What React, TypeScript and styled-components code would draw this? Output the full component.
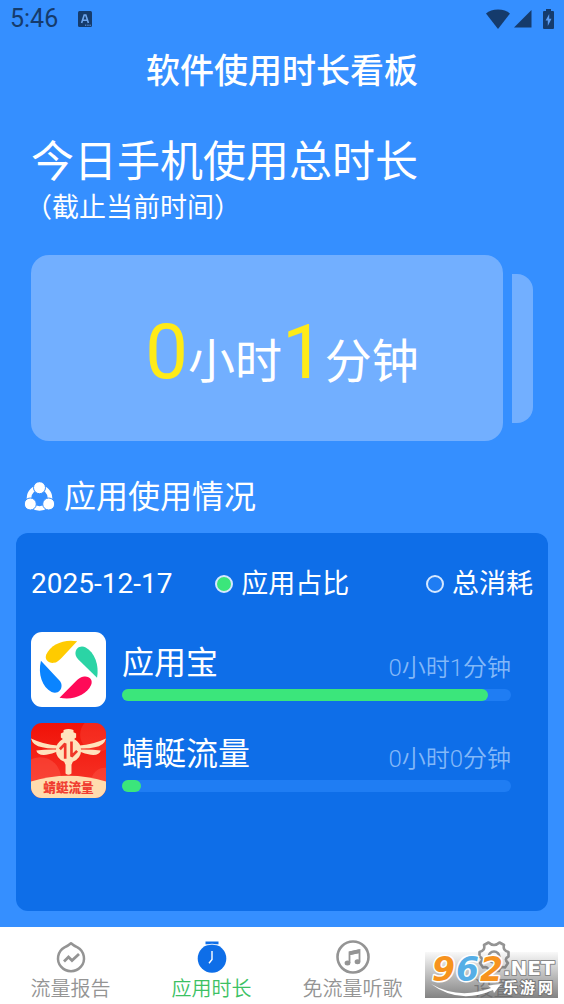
import React from 'react';
import styled, { createGlobalStyle } from 'styled-components';

const GlobalStyle = createGlobalStyle`
  * { box-sizing: border-box; }
  body {
    margin: 0;
    background: #358fff;
    font-family: Roboto, 'Noto Sans CJK SC', sans-serif;
  }
  h1, h2, p, ul { margin: 0; padding: 0; font-weight: 400; }
  ul { list-style: none; }
  svg { display: block; }
`;

const Page = styled.div`
  position: relative;
  display: flex;
  flex-direction: column;
  min-height: 100vh;
  background: #358fff;
  color: #fff;
`;

const StatusBar = styled.header`
  display: flex;
  align-items: center;
  height: 38px;
  padding: 0 10px;
  color: #153b6c;
`;

const Clock = styled.span`
  font-size: 25px;
  line-height: 38px;
  margin-right: 20px;
`;

const StatusIcons = styled.div`
  display: flex;
  align-items: center;
  gap: 4px;
  margin-left: auto;
`;

const Title = styled.h1`
  padding: 8px 16px 0;
  text-align: center;
  font-size: 34px;
  line-height: 50px;
  font-weight: 500;
`;

const Intro = styled.section`
  padding: 36px 31px 0;
`;

const Headline = styled.h2`
  font-size: 43px;
  line-height: 60px;
`;

const Note = styled.p`
  margin-left: -6px;
  font-size: 27px;
  line-height: 32px;
`;

const Summary = styled.section`
  display: flex;
  align-items: center;
  gap: 9px;
  padding: 31px 31px 0;
`;

const SummaryCard = styled.div`
  flex: 1;
  display: flex;
  align-items: baseline;
  justify-content: center;
  height: 186px;
  padding: 52px 0 0 30px;
  border-radius: 18px;
  background: #72afff;
  font-size: 47px;
  line-height: 90px;
  white-space: nowrap;
`;

const Figure = styled.span`
  color: #ffeb17;
  font-size: 76px;
`;

const CardEdge = styled.div`
  width: 21px;
  height: 149px;
  border-radius: 0 16px 16px 0;
  background: #72afff;
`;

const SectionTitle = styled.h2`
  display: flex;
  align-items: center;
  gap: 9px;
  padding: 32px 24px 12px;
  font-size: 32px;
  line-height: 48px;
`;

const Panel = styled.section`
  flex: 1;
  margin: 0 16px 16px;
  padding: 28px 15px 32px;
  border-radius: 12px;
  background: #0e6ee8;
`;

const Legend = styled.div`
  display: flex;
  align-items: center;
  justify-content: space-between;
  font-size: 27px;
  line-height: 46px;
  white-space: nowrap;
`;

const DateText = styled.time`
  font-size: 28px;
`;

const LegendItem = styled.span<{ $last?: boolean }>`
  display: flex;
  align-items: center;
  gap: 8px;
  margin-right: ${(p) => (p.$last ? '0' : '34px')};
`;

const Dot = styled.i<{ $color: string }>`
  width: 18px;
  height: 18px;
  border: 2px solid #d6e8ff;
  border-radius: 50%;
  background: ${(p) => p.$color};
`;

const AppList = styled.ul`
  display: flex;
  flex-direction: column;
  gap: 16px;
  margin-top: 25px;
`;

const AppRow = styled.li`
  display: flex;
  gap: 16px;
  padding-right: 22px;
`;

const AppInfo = styled.div`
  flex: 1;
`;

const AppText = styled.div`
  display: flex;
  align-items: center;
  justify-content: space-between;
  height: 57px;
`;

const AppName = styled.span`
  padding-top: 6px;
  font-size: 32px;
  line-height: 51px;
`;

const Duration = styled.span`
  padding-top: 15px;
  color: #83b8f8;
  font-size: 24px;
  line-height: 42px;
  font-weight: 350;
`;

const Track = styled.div`
  height: 12px;
  border-radius: 6px;
  background: #1f7df3;
`;

const Fill = styled.div`
  height: 12px;
  border-radius: 6px;
  background: #3be67b;
`;

const Nav = styled.nav`
  display: grid;
  grid-template-columns: repeat(4, 1fr);
  height: 77px;
  background: #fff;
`;

const NavButton = styled.button<{ $active?: boolean }>`
  display: flex;
  flex-direction: column;
  align-items: center;
  gap: 2px;
  padding: 14px 0 0;
  border: 0;
  background: none;
  color: ${(p) => (p.$active ? '#3cc163' : '#949494')};
  font: 350 20px/28px Roboto, 'Noto Sans CJK SC', sans-serif;
  white-space: nowrap;
`;

const Watermark = styled.div`
  position: absolute;
  right: 6px;
  bottom: 6px;
  background: linear-gradient(rgba(100, 100, 100, 0.04), rgba(100, 100, 100, 0.8));
`;

const KeyboardIcon = () => (
  <svg width="14" height="16" viewBox="0 0 14 16">
    <rect width="14" height="16" rx="1.5" fill="currentColor" />
    <path d="M3.6 12 6.2 4h1.6l2.6 8M4.7 9.3h4.6" fill="none" stroke="#6ea6ee" strokeWidth="1.6" />
    <path d="M7 14.2h1.3M9.3 14.2h1.3M11.5 14.2h1.3" stroke="#6ea6ee" strokeWidth="1" />
  </svg>
);

const WifiIcon = () => (
  <svg width="24" height="20" viewBox="0 0 24 20">
    <path d="M12 20 0 4.600C3 2 7 .6 12 .6S21 2 24 4.600Z" fill="currentColor" />
  </svg>
);

const SignalIcon = () => (
  <svg width="18" height="18" viewBox="0 0 18 18">
    <path d="M17.500 0V17.500H0Z" fill="currentColor" />
  </svg>
);

const BatteryIcon = () => (
  <svg width="18" height="20" viewBox="-7 0 18 20">
    <path d="M3 0h5v2h2q1 0 1 1v16q0 1-1 1H1q-1 0-1-1V3q0-1 1-1h2Z" fill="currentColor" />
    <path d="M6.200 5 2.600 11.500h2.200V17L8.500 9.700H6.200Z" fill="#5b9cf2" />
  </svg>
);

const RingIcon = () => (
  <svg width="31" height="30" viewBox="0 1 31 30">
    <circle cx="15.500" cy="17" r="10.500" fill="none" stroke="#fff" strokeWidth="4.600" />
    <g fill="#fff" stroke="#358fff" strokeWidth="1">
      <circle cx="15.500" cy="6.700" r="6" />
      <circle cx="6.300" cy="23" r="6" />
      <circle cx="24.700" cy="23" r="6" />
    </g>
  </svg>
);

const StoreIcon = () => (
  <svg width="75" height="75" viewBox="0 0 226 226">
    <rect width="226" height="226" rx="33" fill="#fff" />
    <path d="M139 28C100 20 58 38 46 68 40 84 52 94 68 93 78 92 84 86 92 78Z" fill="#ffcb00" />
    <path d="M199 138C206 100 192 62 165 47 150 39 133 48 134 66 135 74 140 80 148 88Z" fill="#2bd4a5" />
    <path d="M86 198C126 207 168 190 181 160 188 144 176 132 160 134 150 135 144 140 136 148Z" fill="#ff0a58" />
    <path d="M30 87C20 128 34 166 62 181 78 188 93 178 92 160 92 152 86 146 80 140Z" fill="#0a84ff" />
  </svg>
);

const DragonflyIcon = () => (
  <svg width="75" height="75" viewBox="0 0 226 226">
    <defs>
      <linearGradient id="red" x1="0" y1="0" x2="0" y2="1">
        <stop offset="0" stopColor="#f01208" />
        <stop offset="1" stopColor="#f8382c" />
      </linearGradient>
      <clipPath id="tile">
        <rect width="226" height="226" rx="33" />
      </clipPath>
    </defs>
    <g clipPath="url(#tile)">
      <rect width="226" height="226" fill="url(#red)" />
      <circle cx="200" cy="35" r="52" fill="#ff5a48" opacity=".3" />
      <circle cx="28" cy="165" r="62" fill="#ff6a58" opacity=".35" />
      <circle cx="222" cy="175" r="40" fill="#ff6a58" opacity=".3" />
      <path d="M0 176Q113 142 226 176V226H0Z" fill="#ffdcae" />
      <g fill="#ffe3bd">
        <path d="M98 21Q113 15 128 21V28L136 32V44L130 48Q151 60 151 82 151 106 126 117L122 126V152Q113 160 104 152V126L100 117Q75 106 75 82 75 60 96 48L90 44V32L98 28Z" />
        <path d="M80 68Q40 66 0 47 6 70 34 73 56 78 80 76ZM80 80Q44 79 16 83 20 99 46 96 64 93 80 86Z" />
        <path d="M146 68Q186 66 226 47 220 70 192 73 170 78 146 76ZM146 80Q182 79 210 83 206 99 180 96 162 93 146 86Z" />
      </g>
      <path d="M87 79 103 62V108M122 56V101L139 84" fill="none" stroke="#f0372a" strokeWidth="8" strokeLinejoin="bevel" />
      <text x="113" y="209" textAnchor="middle" fontSize="38" fontWeight="900" fontFamily="'Noto Sans CJK SC', sans-serif" fill="#f03e32">
        蜻蜓流量
      </text>
    </g>
  </svg>
);

const ReportIcon = () => (
  <svg width="32" height="32" viewBox="0 0 32 32" fill="none" stroke="currentColor">
    <path d="M16 2.200C18 4 20 5.200 22.500 6.300A13 12.800 0 1 1 9.500 6.300C12 5.200 14 4 16 2.200Z" strokeWidth="2.500" strokeLinejoin="round" />
    <path d="M9 20.500 13.500 16l3.500 3.500 7-6.500" strokeWidth="2.800" />
  </svg>
);

const WatchIcon = () => (
  <svg width="32" height="32" viewBox="0 0 32 32">
    <circle cx="16" cy="17.500" r="14.300" fill="#0e6ee8" />
    <path d="M9.500 .5h13v3h-13Z" fill="#0e6ee8" />
    <path d="M8.500 4.200Q16 2.200 23.500 4.200" fill="none" stroke="#fff" strokeWidth=".8" />
    <path d="M16 10v8.500L13 22.300" fill="none" stroke="#fff" strokeWidth="1.400" />
  </svg>
);

const MusicIcon = () => (
  <svg width="34" height="34" viewBox="0 0 34 34">
    <circle cx="17" cy="17" r="15.500" fill="none" stroke="currentColor" strokeWidth="2.600" />
    <path d="M13.500 23V12.200L23.500 10V21.500M13.500 14.300 23.500 12" fill="none" stroke="currentColor" strokeWidth="1.800" />
    <path d="M13.500 11.500 23.500 9.300V13L13.500 15Z" fill="currentColor" />
    <ellipse cx="11.500" cy="23" rx="2.900" ry="2.500" fill="currentColor" />
    <ellipse cx="21.500" cy="21.700" rx="2.900" ry="2.500" fill="currentColor" />
  </svg>
);

const GearIcon = () => (
  <svg width="32" height="32" viewBox="0 0 32 32" fill="none" stroke="currentColor" strokeWidth="2.600" strokeLinejoin="round">
    <path d="M10.500 1.500Q16 6.500 21.500 1.500L26 4Q24.500 9.500 30.500 11V15.500Q25.500 18 30 22L27 26.500Q22 25 21 30H11Q10 25 5 26.500L2 22Q6.500 18 1.500 15.500V11Q7.500 9.500 6 4Z" />
    <circle cx="16" cy="16" r="5.500" />
  </svg>
);

const SiteLogo = () => (
  <svg width="133" height="46" viewBox="0 0 133 46" overflow="visible">
    <g fontFamily="'DejaVu Sans', sans-serif" fontWeight="700" stroke="#fff" paintOrder="stroke" strokeLinejoin="round">
      <g fontSize="33" fontStyle="italic" strokeWidth="3">
        <text x="7" y="29" fill="#f7931e">9</text>
        <text x="31" y="29" fill="#56aee6">6</text>
        <text x="55" y="29" fill="#f7931e">2</text>
      </g>
      <text x="78" y="23" fontSize="20" fill="#fff" stroke="#888" strokeWidth="2">.NET</text>
    </g>
    <path d="M6 32Q34 48 66 36L63 33.500 76 32 69 41 68 38Q34 53 6 32Z" fill="#fff" />
    <g fontFamily="'Noto Sans CJK SC', sans-serif" fontWeight="700" fontSize="15" fill="#fff" stroke="#777" strokeWidth="2" paintOrder="stroke">
      <text x="78" y="41">乐</text>
      <text x="95" y="41">游</text>
      <text x="113" y="41">网</text>
    </g>
  </svg>
);

const apps = [
  { name: '应用宝', duration: '0小时1分钟', share: 94, Icon: StoreIcon },
  { name: '蜻蜓流量', duration: '0小时0分钟', share: 5, Icon: DragonflyIcon },
];

const tabs = [
  { label: '流量报告', Icon: ReportIcon },
  { label: '应用时长', Icon: WatchIcon, active: true },
  { label: '免流量听歌', Icon: MusicIcon },
  { label: '设置', Icon: GearIcon },
];

const IconSlot = styled.span`
  display: flex;
  align-items: center;
  justify-content: center;
  height: 32px;
`;

export default function App() {
  return (
    <Page>
      <GlobalStyle />
      <StatusBar>
        <Clock>5:46</Clock>
        <KeyboardIcon />
        <StatusIcons>
          <WifiIcon />
          <SignalIcon />
          <BatteryIcon />
        </StatusIcons>
      </StatusBar>
      <Title>软件使用时长看板</Title>
      <Intro>
        <Headline>今日手机使用总时长</Headline>
        <Note>（截止当前时间）</Note>
      </Intro>
      <Summary>
        <SummaryCard>
          <Figure>0</Figure>小时<Figure>1</Figure>分钟
        </SummaryCard>
        <CardEdge />
      </Summary>
      <SectionTitle>
        <RingIcon />
        应用使用情况
      </SectionTitle>
      <Panel>
        <Legend>
          <DateText dateTime="2025-12-17">2025-12-17</DateText>
          <LegendItem>
            <Dot $color="#3be67b" />
            应用占比
          </LegendItem>
          <LegendItem $last>
            <Dot $color="#1f7df3" />
            总消耗
          </LegendItem>
        </Legend>
        <AppList>
          {apps.map(({ name, duration, share, Icon }) => (
            <AppRow key={name}>
              <Icon />
              <AppInfo>
                <AppText>
                  <AppName>{name}</AppName>
                  <Duration>{duration}</Duration>
                </AppText>
                <Track role="progressbar" aria-label={name} aria-valuenow={share}>
                  <Fill style={{ width: `${share}%` }} />
                </Track>
              </AppInfo>
            </AppRow>
          ))}
        </AppList>
      </Panel>
      <Nav>
        {tabs.map(({ label, Icon, active }) => (
          <NavButton key={label} type="button" $active={active}>
            <IconSlot>
              <Icon />
            </IconSlot>
            {label}
          </NavButton>
        ))}
      </Nav>
      <Watermark>
        <SiteLogo />
      </Watermark>
    </Page>
  );
}
